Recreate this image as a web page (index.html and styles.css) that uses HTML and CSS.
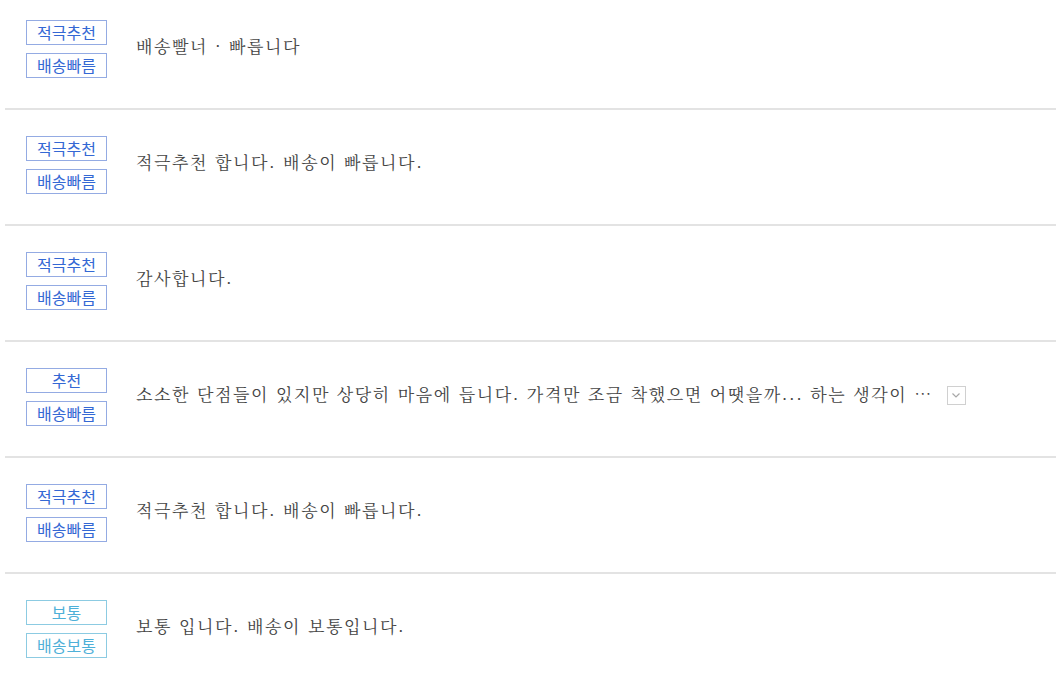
FILE: index.html
```html
<!DOCTYPE html>
<html lang="ko">
<head>
<meta charset="utf-8">
<link rel="stylesheet" href="styles.css">
</head>
<body>
<ul class="reviews">
  <li class="row">
    <div class="badges"><span class="badge">적극추천</span><span class="badge">배송빠름</span></div>
    <p class="text">배송빨너 · 빠릅니다</p>
  </li>
  <li class="row">
    <div class="badges"><span class="badge">적극추천</span><span class="badge">배송빠름</span></div>
    <p class="text">적극추천 합니다. 배송이 빠릅니다.</p>
  </li>
  <li class="row">
    <div class="badges"><span class="badge">적극추천</span><span class="badge">배송빠름</span></div>
    <p class="text">감사합니다.</p>
  </li>
  <li class="row">
    <div class="badges"><span class="badge">추천</span><span class="badge">배송빠름</span></div>
    <p class="text">소소한 단점들이 있지만 상당히 마음에 듭니다. 가격만 조금 착했으면 어땟을까... 하는 생각이 …</p>
    <span class="more"><svg width="16" height="16" viewBox="0 0 16 16"><path d="M4.5 6.5 L8 10 L11.5 6.5" fill="none" stroke="#a8a8a8" stroke-width="1.2"/></svg></span>
  </li>
  <li class="row">
    <div class="badges"><span class="badge">적극추천</span><span class="badge">배송빠름</span></div>
    <p class="text">적극추천 합니다. 배송이 빠릅니다.</p>
  </li>
  <li class="row">
    <div class="badges"><span class="badge normal">보통</span><span class="badge normal">배송보통</span></div>
    <p class="text">보통 입니다. 배송이 보통입니다.</p>
  </li>
</ul>
</body>
</html>
```
FILE: styles.css
```css
html, body {
  margin: 0;
  padding: 0;
  background: #fff;
}
.reviews {
  list-style: none;
  margin: 0 0 0 5px;
  padding: 0;
}
.row {
  display: flex;
  align-items: center;
  padding: 26px 0 30px 21px;
  border-bottom: 2px solid #e3e3e3;
}
.row:first-child {
  padding-top: 20px;
}
.row:last-child {
  border-bottom: none;
}
.badges {
  display: flex;
  flex-direction: column;
  gap: 8px;
  width: 81px;
  flex: none;
}
.badge {
  box-sizing: border-box;
  height: 25px;
  border: 1px solid #94abe3;
  color: #3468d4;
  font-family: "Noto Sans CJK KR", "Liberation Sans", sans-serif;
  font-size: 16px;
  line-height: 22px;
  text-align: center;
}
.badge.normal {
  border-color: #8ccbe2;
  color: #4eb0d8;
}
.text {
  margin: 0 0 0 29px;
  font-family: "Noto Serif CJK KR", "Noto Sans CJK KR", serif;
  font-size: 17px;
  color: #444;
  line-height: 24px;
  letter-spacing: 1.6px;
  position: relative;
  top: -3px;
}
.more {
  display: inline-flex;
  align-items: center;
  justify-content: center;
  box-sizing: border-box;
  width: 19px;
  height: 19px;
  border: 1px solid #d0d0d0;
  margin-left: 14px;
  position: relative;
  top: -2px;
}
```
